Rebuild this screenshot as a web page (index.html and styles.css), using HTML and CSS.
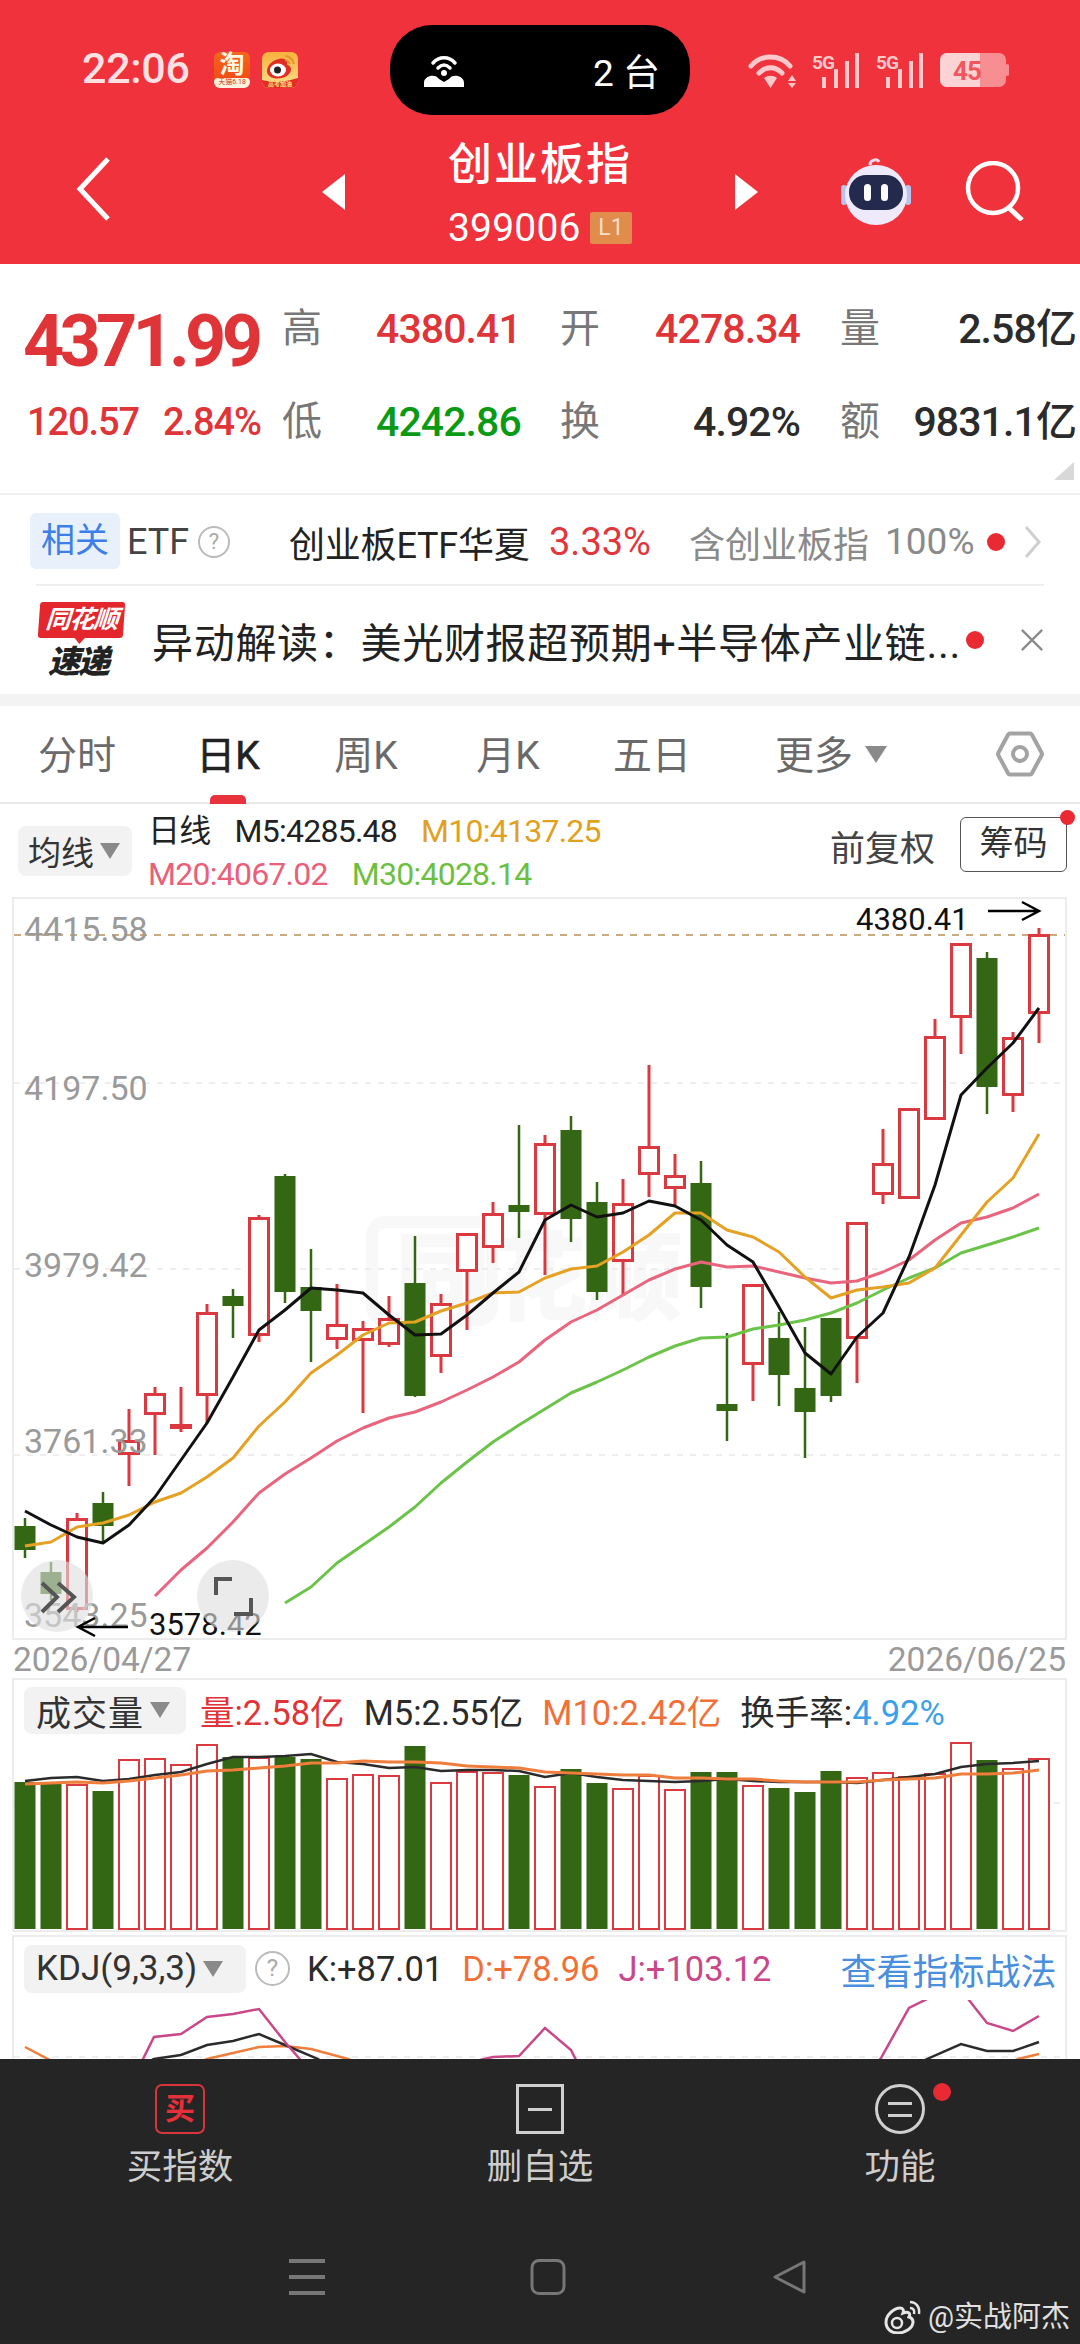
FILE: index.html
```html
<!DOCTYPE html>
<html lang="zh-CN">
<head>
<meta charset="utf-8">
<title>创业板指</title>
<link rel="stylesheet" href="styles.css">
</head>
<body>
<div class="page">
  <header class="top">
    <div class="status">
      <div class="status-left">
        <span class="time">22:06</span>
        <span class="app app-tb"><span class="tb-char">淘</span><span class="tb-strip">天猫6.18</span></span>
        <svg class="app" viewBox="0 0 36 36"><defs><linearGradient id="wbg" x1="0" y1="0" x2="0" y2="1"><stop offset="0" stop-color="#f9b03c"/><stop offset="1" stop-color="#fbe08e"/></linearGradient></defs><rect width="36" height="36" rx="6" fill="url(#wbg)"/><path d="M5 19C5 12 13 7 19 6.500c5 0 7 3 6 6 3 1 4 3 4 5 0 5-7 9-13 9S5 24 5 19z" fill="#e22d24"/><ellipse cx="16" cy="18" rx="8" ry="6.500" fill="#fff"/><circle cx="15.500" cy="18" r="3.500" fill="#222"/><path d="M23 4c4 0 8 3 9 8M23 8c2 0 4 2 5 4" fill="none" stroke="#e8932c" stroke-width="2"/><path d="M0 28c12 3 24 2 36-2v4a6 6 0 0 1-6 6H6a6 6 0 0 1-6-6z" fill="#e22d24"/><text class="wb-text" x="6" y="34">高考加油</text></svg>
      </div>
      <div class="pill">
        <svg class="pill-wifi" viewBox="0 0 44 34"><path d="M11 10C17 3 27 3 33 10M16 15c4-4 8-4 12 0" fill="none" stroke="#fff" stroke-width="3.500" stroke-linecap="round"/><circle cx="22" cy="20" r="3" fill="#fff"/><path d="M2 34v-4c0-4 3-6 6-7 4-1 7 0 9 3l5 3 5-3c2-3 5-4 9-3 3 1 6 3 6 7v4z" fill="#fff"/></svg>
        <span class="pill-text">2 台</span>
      </div>
      <div class="status-right">
        <svg class="st-wifi" viewBox="0 0 52 38"><g fill="none" stroke="#fbc9cb" stroke-width="5" stroke-linecap="round"><path d="M3 15C13 3 32 3 42 15"/><path d="M11 22c7-7 16-7 23 0"/></g><path d="M16 27c4-3 9-3 13 0l-6.500 10z" fill="#fbc9cb"/><path d="M44 24l4 6h-8zM44 37l-4-5h8z" fill="#fbc9cb"/></svg>
        <svg class="st-sig" viewBox="0 0 48 38"><text class="sig-text" x="0" y="18">5G</text><g fill="#fbc9cb"><rect x="10" y="26" width="4" height="11"/><rect x="22" y="18" width="4" height="19"/><rect x="33" y="10" width="4" height="27"/><rect x="43" y="2" width="4" height="35"/></g></svg>
        <svg class="st-sig" viewBox="0 0 48 38"><text class="sig-text" x="0" y="18">5G</text><g fill="#fbc9cb"><rect x="10" y="26" width="4" height="11"/><rect x="22" y="18" width="4" height="19"/><rect x="33" y="10" width="4" height="27"/><rect x="43" y="2" width="4" height="35"/></g></svg>
        <svg class="st-bat" viewBox="0 0 70 34"><rect x="0" y="0" width="66" height="34" rx="7" fill="#f78e92"/><path d="M7 0h33v34H7a7 7 0 0 1-7-7V7a7 7 0 0 1 7-7z" fill="#fbd3d5"/><rect x="66" y="11" width="3" height="12" rx="1.500" fill="#f78e92"/><text class="bat-text" x="13" y="27">45</text></svg>
      </div>
    </div>
    <nav class="nav">
      <svg class="back" viewBox="0 0 40 66"><path d="M34 3L6 33l28 30" fill="none" stroke="#fff" stroke-width="5"/></svg>
      <svg class="tri" viewBox="0 0 23 36"><path d="M23 0v36L0 18z" fill="#fff"/></svg>
      <div class="title-block">
        <div class="title">创业板指</div>
        <div class="code-row"><span class="code">399006</span><span class="l1">L1</span></div>
      </div>
      <svg class="tri" viewBox="0 0 23 36"><path d="M0 0v36l23-18z" fill="#fff"/></svg>
      <div class="nav-right">
        <svg class="robot" viewBox="0 0 72 68"><path d="M30 8c0-5 7-7 9-3" fill="none" stroke="#f3d9ee" stroke-width="3"/><rect x="1" y="28" width="6" height="20" rx="3" fill="#b9c4ee"/><rect x="65" y="28" width="6" height="20" rx="3" fill="#b9c4ee"/><ellipse cx="36" cy="38" rx="31" ry="30" fill="#efeafb"/><rect x="9" y="18" width="54" height="35" rx="17" fill="#232a4d"/><rect x="24" y="27" width="7" height="17" rx="3.500" fill="#fff"/><rect x="41" y="27" width="7" height="17" rx="3.500" fill="#fff"/></svg>
        <svg class="search" viewBox="0 0 60 60"><circle cx="28" cy="27" r="25" fill="none" stroke="#fff" stroke-width="4.500"/><path d="M43 46l14 13" stroke="#fff" stroke-width="5"/></svg>
      </div>
    </nav>
  </header>

  <section class="stats">
    <div class="price-big">4371.99</div>
    <div class="lab">高</div><div class="val red">4380.41</div>
    <div class="lab">开</div><div class="val red right">4278.34</div>
    <div class="lab lab-r">量</div><div class="val dark right">2.58亿</div>
    <div class="price-small"><span>120.57</span><span>2.84%</span></div>
    <div class="lab">低</div><div class="val green">4242.86</div>
    <div class="lab">换</div><div class="val dark right">4.92%</div>
    <div class="lab lab-r">额</div><div class="val dark right">9831.1亿</div>
    <svg class="corner" viewBox="0 0 20 18"><path d="M20 0v18H0z" fill="#d8d8d8"/></svg>
  </section>

  <section class="etf">
    <span class="etf-badge">相关</span>
    <span class="etf-lab">ETF</span>
    <span class="qmark">?</span>
    <span class="etf-name">创业板ETF华夏</span>
    <span class="etf-pct">3.33%</span>
    <span class="etf-hold">含创业板指</span>
    <span class="etf-hold etf-num">100%</span>
    <span class="dot etf-dot"></span>
    <svg class="etf-chev" viewBox="0 0 18 32"><path d="M2 1l13 15L2 31" fill="none" stroke="#cfcfcf" stroke-width="3"/></svg>
  </section>
  <div class="rule"></div>
  <section class="news">
    <div class="logo"><div class="logo-top">同花顺</div><div class="logo-bot">速递</div></div>
    <div class="news-text">异动解读：美光财报超预期+半导体产业链...</div>
    <span class="dot news-dot"></span>
    <svg class="news-x" viewBox="0 0 26 26"><path d="M2 2l22 22M24 2L2 24" stroke="#8a8a8a" stroke-width="2.500"/></svg>
  </section>
  <div class="band"></div>

  <section class="tabs">
    <div class="tab">分时</div>
    <div class="tab tab-on">日K</div>
    <div class="tab">周K</div>
    <div class="tab">月K</div>
    <div class="tab">五日</div>
    <div class="tab">更多<span class="caret tab-caret"></span></div>
    <svg class="hex" viewBox="0 0 48 46"><path d="M14 2.500h20a2 2 0 0 1 1.800 1L45.500 21.500a3 3 0 0 1 0 3L35.800 42.500a2 2 0 0 1-1.800 1H14a2 2 0 0 1-1.800-1L2.500 24.500a3 3 0 0 1 0-3L12.200 3.500a2 2 0 0 1 1.800-1z" fill="none" stroke="#a3a3a3" stroke-width="4"/><circle cx="24" cy="23" r="7" fill="none" stroke="#a3a3a3" stroke-width="4"/></svg>
  </section>

  <section class="ma">
    <div class="sel sel-ma">均线<span class="caret"></span></div>
    <div class="legend">
      <div class="legend-row"><span class="leg-dark">日线</span><span class="leg-dark">M5:4285.48</span><span class="leg-or">M10:4137.25</span></div>
      <div class="legend-row"><span class="leg-pk">M20:4067.02</span><span class="leg-gr">M30:4028.14</span></div>
    </div>
    <div class="fq">前复权</div>
    <div class="chip">筹码<span class="dot chip-dot"></span></div>
  </section>

  <section class="frame frame-k">
    <svg class="k-svg" viewBox="14 899 1051 739">
      <g class="wm"><rect x="372" y="1222" width="120" height="98" rx="14"/><text class="wm-text" x="395" y="1312">同花顺</text></g>
      <path class="g-top" d="M14 935H1065"/>
      <path class="g-mid" d="M14 1083H1065M14 1269H1065M14 1455H1065"/>
      <path class="wick-r" d="M77 1513V1518M77 1610V1612M129 1409V1440M129 1455V1486M155 1387V1393M155 1415V1455M181 1387V1432M207 1304V1312M207 1396V1423M259 1215V1217M259 1336V1342M337 1284V1324M337 1340V1349M363 1321V1328M363 1341V1413M389 1296V1318M389 1345V1347M441 1294V1303M441 1357V1373M467 1272V1330M493 1202V1213M493 1248V1263M545 1135V1143M545 1215V1275M623 1179V1203M623 1262V1296M649 1065V1146M649 1175V1197M675 1154V1175M675 1189V1205M753 1365V1401M857 1339V1383M883 1129V1163M883 1195V1204M935 1019V1036M961 1018V1054M1013 1032V1037M1013 1096V1112M1039 928V934M1039 1014V1043"/>
      <path class="wick-g" d="M25 1518V1558M51 1562V1600M103 1492V1542M233 1289V1338M285 1174V1303M311 1249V1362M415 1236V1397M519 1125V1238M571 1116V1242M597 1182V1300M701 1161V1308M727 1333V1441M779 1312V1406M805 1327V1458M831 1318V1402M987 952V1114"/>
      <g class="body-r">
        <rect x="67.500" y="1519.500" width="19" height="89"/><rect x="119.500" y="1441.500" width="19" height="12"/><rect x="145.500" y="1394.500" width="19" height="19"/><rect x="197.500" y="1313.500" width="19" height="81"/><rect x="249.500" y="1218.500" width="19" height="116"/><rect x="327.500" y="1325.500" width="19" height="13"/><rect x="353.500" y="1329.500" width="19" height="10"/><rect x="379.500" y="1319.500" width="19" height="24"/><rect x="431.500" y="1304.500" width="19" height="51"/><rect x="457.500" y="1234.500" width="19" height="36"/><rect x="483.500" y="1214.500" width="19" height="32"/><rect x="535.500" y="1144.500" width="19" height="69"/><rect x="613.500" y="1204.500" width="19" height="56"/><rect x="639.500" y="1147.500" width="19" height="26"/><rect x="665.500" y="1176.500" width="19" height="11"/><rect x="743.500" y="1285.500" width="19" height="78"/><rect x="847.500" y="1223.500" width="19" height="114"/><rect x="873.500" y="1164.500" width="19" height="29"/><rect x="899.500" y="1109.500" width="19" height="88"/><rect x="925.500" y="1037.500" width="19" height="81"/><rect x="951.500" y="944.500" width="19" height="72"/><rect x="1003.500" y="1038.500" width="19" height="56"/><rect x="1029.500" y="935.500" width="19" height="77"/>
      </g>
      <rect class="fill-r" x="170" y="1424" width="22" height="5"/>
      <g class="body-g">
        <rect x="14.500" y="1526" width="21" height="24"/><rect x="40.500" y="1572" width="21" height="22"/><rect x="92.500" y="1503" width="21" height="23"/><rect x="222.500" y="1296" width="21" height="10"/><rect x="274.500" y="1176" width="21" height="116"/><rect x="300.500" y="1287" width="21" height="24"/><rect x="404.500" y="1283" width="21" height="113"/><rect x="508.500" y="1205" width="21" height="7"/><rect x="560.500" y="1130" width="21" height="89"/><rect x="586.500" y="1202" width="21" height="90"/><rect x="690.500" y="1183" width="21" height="104"/><rect x="716.500" y="1404" width="21" height="7"/><rect x="768.500" y="1338" width="21" height="37"/><rect x="794.500" y="1388" width="21" height="24"/><rect x="820.500" y="1318" width="21" height="78"/><rect x="976.500" y="958" width="21" height="129"/>
      </g>
      <polyline class="ln ln-gr" points="285,1603 311,1587 337,1563 363,1545 389,1527 415,1507 441,1483 467,1462 493,1442 519,1425 545,1409 571,1393 597,1382 623,1370 649,1357 675,1346 701,1338 727,1337 753,1329 779,1325 805,1320 831,1313 857,1303 883,1290 909,1278 935,1268 961,1253 987,1245 1013,1237 1039,1228"/>
      <polyline class="ln ln-pk" points="155,1596 181,1570 207,1548 233,1522 259,1493 285,1474 311,1458 337,1441 363,1428 389,1418 415,1412 441,1402 467,1390 493,1377 519,1362 545,1340 571,1322 597,1310 623,1295 649,1280 675,1269 701,1262 727,1267 753,1266 779,1272 805,1278 831,1283 857,1281 883,1272 909,1260 935,1240 961,1223 987,1217 1013,1208 1039,1194"/>
      <polyline class="ln ln-or" points="25,1546 51,1542 77,1527 103,1523 129,1515 155,1502 181,1493 207,1477 233,1458 259,1426 285,1402 311,1373 337,1355 363,1335 389,1323 415,1322 441,1311 467,1303 493,1293 519,1292 545,1278 571,1269 597,1266 623,1252 649,1235 675,1213 701,1213 727,1230 753,1237 779,1252 805,1277 831,1298 857,1290 883,1287 909,1283 935,1268 961,1235 987,1202 1013,1178 1039,1134"/>
      <polyline class="ln ln-bk" points="25,1511 51,1525 77,1537 103,1543 129,1525 155,1497 181,1460 207,1423 233,1377 259,1330 285,1310 311,1288 337,1290 363,1293 389,1315 415,1335 441,1334 467,1315 493,1293 519,1272 545,1220 571,1205 597,1217 623,1213 649,1201 675,1206 701,1220 727,1245 753,1262 779,1307 805,1353 831,1374 857,1337 883,1313 909,1257 935,1185 961,1095 987,1068 1013,1043 1039,1008"/>
      <g class="axis">
        <text x="24" y="941">4415.58</text><text x="24" y="1100">4197.50</text><text x="24" y="1277">3979.42</text><text x="24" y="1453">3761.33</text><text x="24" y="1627">3543.25</text>
      </g>
      <g class="note">
        <text x="856" y="930">4380.41</text><text x="149" y="1635">3578.42</text>
      </g>
      <path class="arrow" d="M988 911H1039M1022 902l17 9-17 9M128 1627H78M95 1618l-17 9 17 9"/>
      <circle class="fab" cx="57" cy="1596" r="36"/>
      <circle class="fab" cx="233" cy="1596" r="36"/>
      <path class="fab-ic" d="M42 1583l15 14-15 15M58 1583l16 14-16 15"/>
      <path class="fab-ic" d="M232 1579h-16v16M234 1614h17v-16"/>
    </svg>
  </section>

  <div class="dates"><span>2026/04/27</span><span>2026/06/25</span></div>

  <section class="frame frame-v">
    <div class="sub-head">
      <div class="sel sel-v">成交量<span class="caret"></span></div>
      <span class="t-red">量:2.58亿</span>
      <span class="t-dark">M5:2.55亿</span>
      <span class="t-or">M10:2.42亿</span>
      <span class="t-dark">换手率:<span class="t-blue">4.92%</span></span>
    </div>
    <svg class="v-svg" viewBox="14 1740 1051 190">
      <path class="g-mid" d="M14 1803H1065"/>
      <g class="bar-g">
        <rect x="14.500" y="1782" width="21" height="147"/><rect x="40.500" y="1783" width="21" height="146"/><rect x="92.500" y="1791" width="21" height="138"/><rect x="222.500" y="1757" width="21" height="172"/><rect x="274.500" y="1757" width="21" height="172"/><rect x="300.500" y="1759" width="21" height="170"/><rect x="404.500" y="1746" width="21" height="183"/><rect x="508.500" y="1775" width="21" height="154"/><rect x="560.500" y="1769" width="21" height="160"/><rect x="586.500" y="1783" width="21" height="146"/><rect x="690.500" y="1772" width="21" height="157"/><rect x="716.500" y="1772" width="21" height="157"/><rect x="768.500" y="1788" width="21" height="141"/><rect x="794.500" y="1792" width="21" height="137"/><rect x="820.500" y="1771" width="21" height="158"/><rect x="976.500" y="1760" width="21" height="169"/>
      </g>
      <g class="bar-r">
        <rect x="67" y="1785" width="20" height="144"/><rect x="119" y="1760" width="20" height="169"/><rect x="145" y="1759" width="20" height="170"/><rect x="171" y="1765" width="20" height="164"/><rect x="197" y="1745" width="20" height="184"/><rect x="249" y="1758" width="20" height="171"/><rect x="327" y="1779" width="20" height="150"/><rect x="353" y="1775" width="20" height="154"/><rect x="379" y="1776" width="20" height="153"/><rect x="431" y="1783" width="20" height="146"/><rect x="457" y="1772" width="20" height="157"/><rect x="483" y="1773" width="20" height="156"/><rect x="535" y="1787" width="20" height="142"/><rect x="613" y="1789" width="20" height="140"/><rect x="639" y="1776" width="20" height="153"/><rect x="665" y="1790" width="20" height="139"/><rect x="743" y="1786" width="20" height="143"/><rect x="847" y="1778" width="20" height="151"/><rect x="873" y="1773" width="20" height="156"/><rect x="899" y="1777" width="20" height="152"/><rect x="925" y="1774" width="20" height="155"/><rect x="951" y="1743" width="20" height="186"/><rect x="1003" y="1769" width="20" height="160"/><rect x="1029" y="1759" width="20" height="170"/>
      </g>
      <polyline class="ln-v ln-v-dk" points="25,1781 51,1778 77,1777 103,1781 129,1779 155,1775 181,1772 207,1764 233,1757 259,1757 285,1756 311,1754 337,1762 363,1764 389,1768 415,1767 441,1771 467,1770 493,1770 519,1771 545,1777 571,1773 597,1777 623,1780 649,1781 675,1782 701,1781 727,1779 753,1781 779,1782 805,1782 831,1782 857,1783 883,1780 909,1777 935,1774 961,1767 987,1764 1013,1763 1039,1761"/>
      <polyline class="ln-v ln-v-or" points="25,1784 51,1783 77,1782 103,1783 129,1781 155,1778 181,1775 207,1771 233,1770 259,1768 285,1766 311,1763 337,1763 363,1761 389,1762 415,1762 441,1763 467,1766 493,1767 519,1768 545,1772 571,1773 597,1774 623,1775 649,1775 675,1778 701,1778 727,1779 753,1779 779,1781 805,1782 831,1782 857,1782 883,1780 909,1779 935,1778 961,1774 987,1774 1013,1773 1039,1770"/>
    </svg>
  </section>

  <section class="frame frame-kdj">
    <div class="sub-head sub-kdj">
      <div class="sel sel-kdj">KDJ(9,3,3)<span class="caret"></span></div>
      <span class="qmark qmark-k">?</span>
      <span class="t-dark">K:+87.01</span>
      <span class="t-or">D:+78.96</span>
      <span class="t-mag">J:+103.12</span>
      <span class="t-link">查看指标战法</span>
    </div>
    <svg class="kdj-svg" viewBox="14 2000 1051 59">
      <path class="g-mid" d="M14 2057H1065"/>
      <polyline class="kl kl-or" points="25,2047 48,2059 60,2066"/>
      <polyline class="kl kl-or" points="190,2066 207,2059 233,2053 259,2047 285,2046 311,2049 348,2059 360,2064"/>
      <polyline class="kl kl-or" points="1005,2066 1018,2059 1039,2054"/>
      <polyline class="kl kl-dk" points="140,2066 154,2059 181,2055 207,2045 233,2041 259,2034 285,2045 318,2059 325,2064"/>
      <polyline class="kl kl-dk" points="915,2066 927,2059 961,2044 987,2051 1013,2051 1039,2042"/>
      <polyline class="kl kl-mg" points="135,2075 154,2037 181,2034 207,2017 233,2014 259,2009 285,2042 304,2064"/>
      <polyline class="kl kl-mg" points="480,2060 493,2057 519,2056 545,2028 571,2050 578,2064"/>
      <polyline class="kl kl-mg" points="875,2066 881,2058 909,2008 935,1995 961,1990 987,2023 1013,2031 1039,2016"/>
    </svg>
  </section>

  <footer class="bottom">
    <div class="actions">
      <div class="act">
        <div class="act-ic ic-buy">买</div>
        <div class="act-lab">买指数</div>
      </div>
      <div class="act">
        <div class="act-ic ic-del"><span class="ic-dash"></span></div>
        <div class="act-lab">删自选</div>
      </div>
      <div class="act">
        <div class="act-ic ic-fn"><span class="ic-dash"></span><span class="ic-dash"></span><span class="dot fn-dot"></span></div>
        <div class="act-lab">功能</div>
      </div>
    </div>
    <div class="sysnav">
      <svg class="sys" viewBox="0 0 36 36"><path d="M0 2h36M0 18h36M0 34h36" stroke="#777" stroke-width="4"/></svg>
      <svg class="sys" viewBox="0 0 36 36"><rect x="2" y="1.500" width="32" height="33" rx="7" fill="none" stroke="#777" stroke-width="3"/></svg>
      <svg class="sys" viewBox="0 0 36 36"><path d="M33 3L4 18l29 15z" fill="none" stroke="#777" stroke-width="3" stroke-linejoin="round"/></svg>
    </div>
    <div class="mark">
      <svg class="mark-ic" viewBox="0 0 40 34"><path d="M3 22C3 15 11 8 17 8c3 0 4 2 3 5 5-2 8 0 6 4 3 1 4 3 4 5 0 6-8 11-15 11S3 29 3 22z" fill="none" stroke="#e6e6e6" stroke-width="3"/><circle cx="14" cy="23" r="5" fill="none" stroke="#e6e6e6" stroke-width="2.500"/><path d="M27 2c6 0 10 5 9 12M27 8c3 0 5 2 4 6" fill="none" stroke="#e6e6e6" stroke-width="2.500"/></svg>
      <span>@实战阿杰</span>
    </div>
  </footer>
</div>
</body>
</html>
```
FILE: styles.css
```css
* { box-sizing: border-box; }
html, body { margin: 0; padding: 0; background: #fff; }
body { width: 1080px; height: 2344px; overflow: hidden; font-family: Roboto, "Noto Sans CJK SC", sans-serif; color: #222; }
svg { display: block; flex: none; }
text { font-family: Roboto, "Noto Sans CJK SC", sans-serif; }
.page { width: 1080px; height: 2344px; display: flex; flex-direction: column; }

/* header */
.top { height: 264px; background: #ef323b; color: #fff; flex: none; }
.status { display: grid; grid-template-columns: 390px 300px 390px; padding-top: 25px; height: 130px; }
.status-left { display: flex; align-items: center; height: 90px; padding-left: 82px; }
.time { font-size: 43px; line-height: 86px; height: 90px; font-weight: 500; letter-spacing: -.3px; color: #fde0e1; width: 132px; }
.app { width: 36px; height: 36px; border-radius: 6px; margin-right: 12px; }
.app-tb { display: flex; flex-direction: column; align-items: center; background: linear-gradient(#f6661d, #ee4414); }
.tb-char { font-size: 25px; line-height: 26px; height: 26px; font-weight: 700; color: #fff7e6; }
.tb-strip { height: 10px; width: 36px; line-height: 9px; text-align: center; font-size: 7px; background: #fff1de; color: #c8401a; white-space: nowrap; border-radius: 4px 4px 6px 6px; }
.wb-text { font-size: 6px; font-weight: 700; fill: #fde27a; }
.pill { background: #000; border-radius: 42px; height: 90px; display: flex; align-items: center; padding: 0 30px 0 32px; justify-content: space-between; }
.pill-wifi { width: 44px; height: 34px; }
.pill-text { font-size: 37px; color: #fff; }
.status-right { display: flex; align-items: center; height: 90px; padding-left: 58px; }
.st-wifi { width: 52px; height: 38px; margin-right: 12px; }
.st-sig { width: 48px; height: 38px; margin-right: 16px; }
.sig-text { font-size: 19px; font-weight: 700; fill: #fbc9cb; letter-spacing: -1px; }
.st-bat { width: 70px; height: 34px; }
.bat-text { font-size: 26px; font-weight: 700; fill: #f2555c; letter-spacing: -1px; }
.nav { display: grid; grid-template-columns: 322px 23px 390px 23px 322px; height: 134px; align-items: center; }
.back { width: 40px; height: 66px; margin: -16px 0 0 74px; }
.tri { width: 23px; height: 36px; margin-top: -10px; }
.title-block { display: flex; flex-direction: column; align-items: center; height: 134px; padding-top: 8px; }
.title { font-size: 44px; line-height: 54px; letter-spacing: 2px; font-weight: 500; }
.code-row { display: flex; align-items: center; margin-top: 20px; height: 32px; }
.code { font-size: 39px; letter-spacing: .2px; width: 142px; }
.l1 { background: #df8c4d; width: 42px; height: 32px; line-height: 32px; text-align: center; font-size: 23px; color: #f9dfc8; border-radius: 2px; }
.nav-right { display: flex; align-items: center; padding-left: 82px; margin-top: -12px; }
.robot { width: 72px; height: 68px; margin-right: 53px; }
.search { width: 60px; height: 60px; }

/* stats */
.stats { position: relative; height: 231px; flex: none; padding-top: 18px; display: grid; grid-template-columns: 282px 94px 184px 40px 200px 80px 196px; grid-auto-rows: 93px; align-items: center; border-bottom: 2px solid #efefef; }
.price-big { font-size: 72px; font-weight: 700; color: #df3438; letter-spacing: -4.800px; padding: 26px 0 0 23px; line-height: 70px; }
.price-small { display: flex; gap: 24px; padding-left: 27px; font-size: 38px; font-weight: 500; letter-spacing: -1.100px; color: #df3438; }
.lab { font-size: 40px; color: #777; line-height: 50px; }
.lab-r { text-align: right; }
.val { font-size: 41px; font-weight: 500; letter-spacing: -.9px; line-height: 50px; white-space: nowrap; }
.right { text-align: right; }
.red { color: #df3438; }
.green { color: #0b9a16; }
.dark { color: #2b2b2b; }
.corner { position: absolute; right: 6px; bottom: 13px; width: 20px; height: 18px; }

/* etf */
.etf { display: flex; align-items: center; height: 89px; padding: 4px 0 0 30px; flex: none; font-size: 36px; white-space: nowrap; }
.etf-badge { width: 90px; height: 56px; line-height: 54px; text-align: center; background: #e8f0fc; color: #3d7fe6; border-radius: 6px; font-size: 34px; margin-top: -2px; }
.etf-lab { margin-left: 7px; color: #444; font-size: 36px; width: 62px; }
.qmark { width: 32px; height: 32px; line-height: 28px; text-align: center; border: 2px solid #bbb; border-radius: 50%; color: #aaa; font-size: 22px; margin-left: 9px; flex: none; }
.etf-name { margin-left: 59px; width: 241px; color: #222; letter-spacing: -.2px; }
.etf-pct { margin-left: 19px; width: 104px; color: #e0363c; font-size: 38px; }
.etf-hold { margin-left: 36px; width: 180px; color: #8a8a8a; }
.etf-num { margin-left: 16px; width: 98px; font-size: 37px; }
.dot { display: block; background: #e92a32; border-radius: 50%; }
.etf-dot { width: 18px; height: 18px; margin-left: 4px; }
.etf-chev { width: 18px; height: 32px; margin-left: 19px; }
.rule { height: 2px; background: #eeeeee; margin: 0 36px; flex: none; }

/* news */
.news { display: flex; align-items: center; height: 108px; padding-left: 37px; flex: none; white-space: nowrap; }
.logo { width: 88px; display: flex; flex-direction: column; align-items: center; }
.logo-top { position: relative; width: 85px; height: 36px; background: #e3272d; border-radius: 3px; color: #fff; font-size: 25px; line-height: 35px; text-align: center; font-weight: 700; font-style: italic; letter-spacing: -1px; transform: skewX(-4deg); }
.logo-top::after { content: ""; position: absolute; left: 36px; bottom: -6px; border-left: 6px solid transparent; border-right: 6px solid transparent; border-top: 7px solid #e3272d; }
.logo-bot { font-size: 32px; line-height: 34px; margin: 7px 6px 0 0; font-weight: 900; font-style: italic; color: #222; letter-spacing: -2px; }
.news-text { margin-left: 27px; font-size: 41px; color: #222; width: 814px; letter-spacing: .7px; }
.news-dot { width: 18px; height: 18px; margin-left: 0; }
.news-x { width: 24px; height: 24px; margin-left: 36px; }
.band { height: 12px; background: #f3f3f3; flex: none; }

/* tabs */
.tabs { display: grid; grid-template-columns: 154px 148px 128px 156px 132px 226px 136px; height: 98px; align-items: center; flex: none; border-bottom: 2px solid #e8e8e8; padding-bottom: 8px; }
.tab { position: relative; height: 90px; padding-top: 8px; line-height: 84px; text-align: center; font-size: 39px; color: #6a6a6a; }
.tab-on { color: #222; -webkit-text-stroke: .6px #222; }
.tab-on::after { content: ""; position: absolute; left: 56px; bottom: -8px; width: 36px; height: 9px; background: #e8323c; border-radius: 5px 5px 0 0; }
.caret { display: inline-block; width: 0; height: 0; border-left: 10px solid transparent; border-right: 10px solid transparent; border-top: 16px solid #8a8a8a; margin-left: 6px; vertical-align: middle; }
.tab-caret { border-left-width: 11px; border-right-width: 11px; border-top-width: 17px; margin-left: 12px; margin-top: -8px; }
.hex { width: 48px; height: 46px; margin: 6px 0 0 52px; }

/* ma row */
.ma { display: flex; align-items: center; height: 93px; flex: none; padding-left: 18px; white-space: nowrap; }
.sel { background: #f2f2f2; border-radius: 8px; display: flex; align-items: center; color: #333; }
.sel-ma { width: 114px; height: 50px; padding-left: 10px; font-size: 33px; margin-top: 1px; }
.legend { margin-left: 16px; margin-top: 5px; width: 680px; }
.legend-row { display: flex; gap: 24px; height: 43px; line-height: 43px; font-size: 32px; letter-spacing: -.75px; }
.leg-dark { color: #222; }
.leg-or { color: #e0a11e; }
.leg-pk { color: #e8607a; }
.leg-gr { color: #6cbf40; }
.fq { font-size: 35px; color: #444; width: 130px; margin-left: 2px; margin-top: -10px; }
.chip { position: relative; width: 107px; height: 55px; border: 1.500px solid #555; border-radius: 6px; text-align: center; line-height: 51px; font-size: 34px; color: #333; margin-top: -12px; }
.chip-dot { position: absolute; right: -9px; top: -8px; width: 15px; height: 15px; }

/* chart frames */
.frame { margin: 0 13px 0 12px; border: 2px solid #ececec; flex: none; }
.frame-k { height: 743px; }
.k-svg { width: 1051px; height: 739px; overflow: visible; }
.wm rect { fill: none; stroke: #f8f8f8; stroke-width: 12; }
.wm-text { font-size: 96px; font-weight: 900; fill: #f8f8f8; }
.g-top { stroke: #c9ab80; stroke-width: 2; stroke-dasharray: 7 7; fill: none; }
.g-mid { stroke: #e9e9e9; stroke-width: 1.500; stroke-dasharray: 6 7; fill: none; }
.wick-r { stroke: #d9393f; stroke-width: 3; fill: none; }
.wick-g { stroke: #336713; stroke-width: 2.500; fill: none; }
.body-r rect { fill: #fff; stroke: #d9393f; stroke-width: 3; }
.fill-r { fill: #d9393f; }
.body-g rect { fill: #336713; }
.ln { fill: none; stroke-width: 3; stroke-linejoin: round; }
.ln-gr { stroke: #6cc34a; }
.ln-pk { stroke: #e8657d; }
.ln-or { stroke: #e5a123; }
.ln-bk { stroke: #111; }
.axis text { font-size: 34px; font-weight: 400; fill: #9a9a9a; }
.note text { font-size: 31px; fill: #111; }
.arrow { fill: none; stroke: #000; stroke-width: 2.500; }
.fab { fill: rgba(222, 222, 222, .62); }
.fab-ic { fill: none; stroke: #555; stroke-width: 4; }

.dates { display: flex; justify-content: space-between; height: 38px; line-height: 36px; padding: 2px 14px 0 13px; font-size: 33.500px; color: #9a9a9a; flex: none; align-items: flex-end; }
.frame-v { height: 254px; border-bottom-width: 2px; }
.sub-head { display: flex; align-items: center; height: 60px; padding-left: 10px; white-space: nowrap; font-size: 34.500px; gap: 19px; }
.sel-v { width: 162px; height: 47px; padding-left: 12px; font-size: 35px; letter-spacing: 1px; margin-right: -5px; }
.t-red { color: #df3438; }
.t-dark { color: #2b2b2b; }
.t-or { color: #f07038; }
.t-blue { color: #3aa0e8; }
.t-mag { color: #c8488a; }
.t-link { color: #4a8ede; font-size: 36px; margin-left: 50px; }
.v-svg { width: 1051px; height: 190px; }
.bar-g rect { fill: #336713; }
.bar-r rect { fill: #fff; stroke: #d9393f; stroke-width: 2; }
.ln-v { fill: none; stroke-width: 2.500; }
.ln-v-dk { stroke: #2b2b2b; }
.ln-v-or { stroke: #ef7d3b; stroke-width: 3; }
.frame-kdj { height: 124px; margin-top: 3px; border-bottom: 0; overflow: hidden; }
.sub-kdj { height: 63px; gap: 19px; }
.sel-kdj { width: 222px; height: 48px; padding-left: 12px; font-size: 35px; margin-right: -10px; }
.qmark-k { width: 35px; height: 35px; line-height: 31px; margin-left: 0; margin-right: -2px; font-size: 24px; }
.kdj-svg { width: 1051px; height: 59px; }
.kl { fill: none; stroke-width: 2.500; }
.kl-or { stroke: #ef7d3b; }
.kl-dk { stroke: #2b2b2b; }
.kl-mg { stroke: #c8488a; }

/* bottom */
.bottom { position: relative; flex: 1; background: #252525; }
.actions { display: grid; grid-template-columns: repeat(3, 360px); padding-top: 25px; }
.act { display: flex; flex-direction: column; align-items: center; }
.act-ic { position: relative; width: 50px; height: 50px; display: flex; flex-direction: column; align-items: center; justify-content: center; }
.ic-buy { border: 2.500px solid #d8343c; border-radius: 7px; color: #e5303a; font-size: 30px; font-weight: 700; line-height: 1; }
.ic-del { border: 3px solid #cfcfcf; width: 48px; }
.ic-fn { border: 3px solid #cfcfcf; border-radius: 50%; gap: 9px; }
.ic-dash { display: block; width: 24px; height: 3px; background: #cfcfcf; }
.fn-dot { position: absolute; left: 55px; top: -4px; width: 18px; height: 18px; }
.act-lab { margin-top: 13px; font-size: 35.500px; line-height: 40px; color: #cdcdcd; }
.sysnav { display: flex; justify-content: center; gap: 205px; margin-top: 72px; padding-left: 16px; }
.sys { width: 36px; height: 36px; }
.mark { position: absolute; right: 10px; bottom: 9px; display: flex; align-items: center; gap: 5px; color: #e0e0e0; font-size: 29px; line-height: 36px; }
.mark-ic { width: 40px; height: 34px; }
```
